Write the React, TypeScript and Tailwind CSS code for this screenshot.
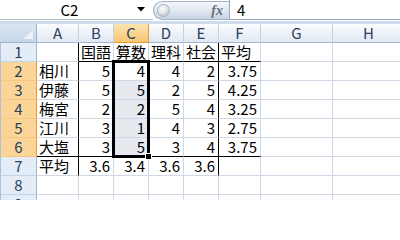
import React from "react";

const COLS = [
  { w: 42, l: "A" },
  { w: 35, l: "B" },
  { w: 35, l: "C" },
  { w: 35, l: "D" },
  { w: 35, l: "E" },
  { w: 42, l: "F" },
  { w: 72, l: "G" },
  { w: 72, l: "H" },
];

const DATA: string[][] = [
  ["", "国語", "算数", "理科", "社会", "平均"],
  ["相川", "5", "4", "4", "2", "3.75"],
  ["伊藤", "5", "5", "2", "5", "4.25"],
  ["梅宮", "2", "2", "5", "4", "3.25"],
  ["江川", "3", "1", "4", "3", "2.75"],
  ["大塩", "3", "5", "3", "4", "3.75"],
  ["平均", "3.6", "3.4", "3.6", "3.6", ""],
  [],
  [],
];

function FormulaBar() {
  return (
    <div className="flex h-[20px] bg-white">
      <div className="flex h-[20px] w-[150px] items-center border-b border-[#b4c0d0]">
        <span className="flex-1 pl-[4px] text-center text-[15px] leading-[18px] text-black">C2</span>
        <svg width="8" height="5" viewBox="0 0 8 5" className="mr-[5px] ml-[2px]">
          <polygon points="0,0 8,0 4,4.5" fill="#000" />
        </svg>
      </div>
      <div className="w-[3px] border-b border-[#b4c0d0]" />
      <div className="relative mt-[1px] flex h-[19px] w-[76px] items-center justify-end rounded-l-[10px] border border-r-0 border-[#9fb1c8] bg-gradient-to-b from-[#f4f7fb] via-[#e1e8f1] to-[#c7d3e3] pr-[6px]">
        <div className="absolute left-[3px] top-[2px] h-[13px] w-[13px] rounded-full border border-[#a9b4c1] bg-[radial-gradient(circle_at_40%_35%,#ffffff_0%,#e6e9ed_40%,#a7afb9_100%)]" />
        <span className="font-['Liberation_Serif',serif] text-[14px] font-bold italic leading-none text-[#6b6f75]">fx</span>
      </div>
      <div className="flex h-[20px] flex-1 items-center border-b border-l border-[#9aa8bb] pl-[7px] text-[15px] leading-[18px] text-black">
        4
      </div>
    </div>
  );
}

function HeaderRow() {
  return (
    <div className="flex h-[19px]">
      <div className="relative h-[19px] w-[37px] shrink-0 border-b border-r border-[#9eb6ce] bg-gradient-to-b from-[#dbe5f2] to-[#c6d5e8]">
        <svg width="10" height="9" viewBox="0 0 10 9" className="absolute right-[3px] bottom-[3px]">
          <polygon points="10,0 10,9 0,9" fill="#eef3f9" />
        </svg>
      </div>
      {COLS.map((c) => {
        const sel = c.l === "C";
        return (
          <div
            key={c.l}
            style={{ width: c.w }}
            className={
              sel
                ? "flex h-[19px] shrink-0 items-center justify-center border-b border-r border-[#f29536] bg-gradient-to-b from-[#fbe3b1] to-[#f5c772] text-[15px] leading-[18px] text-[#27415f]"
                : "flex h-[19px] shrink-0 items-center justify-center border-b border-r border-[#c5d2e3] border-b-[#9eb6ce] bg-gradient-to-b from-[#fafcfe] to-[#e1e8f2] text-[15px] leading-[18px] text-[#27415f]"
            }
          >
            {c.l}
          </div>
        );
      })}
    </div>
  );
}

function Row({ r }: { r: number }) {
  const rowSel = r >= 1 && r <= 5;
  const vals = DATA[r];
  return (
    <div className="flex h-[19px]">
      <div
        className={
          rowSel
            ? "flex h-[19px] w-[37px] shrink-0 items-center justify-center border-b border-l border-r border-l-[#a9c0de] border-r-[#f29536] border-b-[#f7c880] bg-[#fbd597] text-[15px] leading-[18px] text-[#27415f]"
            : "flex h-[19px] w-[37px] shrink-0 items-center justify-center border-b border-l border-r border-l-[#a9c0de] border-r-[#9eb6ce] border-b-[#c5d2e3] bg-[#e4ecf7] text-[15px] leading-[18px] text-[#27415f]"
        }
      >
        {r + 1}
      </div>
      {COLS.map((c, ci) => {
        const v = vals[ci] ?? "";
        const rightBlack = (ci === 0 || ci === 4) && r <= 6;
        const bottomBlack = (r === 0 && ci >= 1 && ci <= 5) || (r === 5 && ci <= 5);
        const shaded = ci === 2 && r >= 2 && r <= 5;
        const left = r === 0 || ci === 0;
        const cls = [
          "flex h-[19px] shrink-0 items-center whitespace-nowrap border-b border-r text-[15px] leading-[18px] text-black",
          rightBlack ? "border-r-black" : "border-r-[#d0d7e5]",
          bottomBlack ? "border-b-black" : "border-b-[#d0d7e5]",
          shaded ? "bg-[#e6e9ef]" : "bg-white",
          left ? "justify-start pl-[2px]" : "justify-end pr-[3px]",
        ].join(" ");
        return (
          <div key={c.l} style={{ width: c.w }} className={cls}>
            {v}
          </div>
        );
      })}
    </div>
  );
}

export default function App() {
  return (
    <div className="h-[200px] w-[400px] overflow-hidden bg-white font-['Noto_Sans_CJK_JP',sans-serif]">
      <FormulaBar />
      <div className="h-[4px] border-t border-white bg-[#cfdcee]" />
      <div className="relative">
        <HeaderRow />
        {DATA.map((_, r) => (
          <Row key={r} r={r} />
        ))}
        <div className="pointer-events-none absolute left-[112px] top-[36px] h-[98px] w-[38px] border-[3px] border-black" />
        <div className="pointer-events-none absolute left-[145px] top-[129px] h-[7px] w-[7px] border border-white bg-black" />
      </div>
    </div>
  );
}
